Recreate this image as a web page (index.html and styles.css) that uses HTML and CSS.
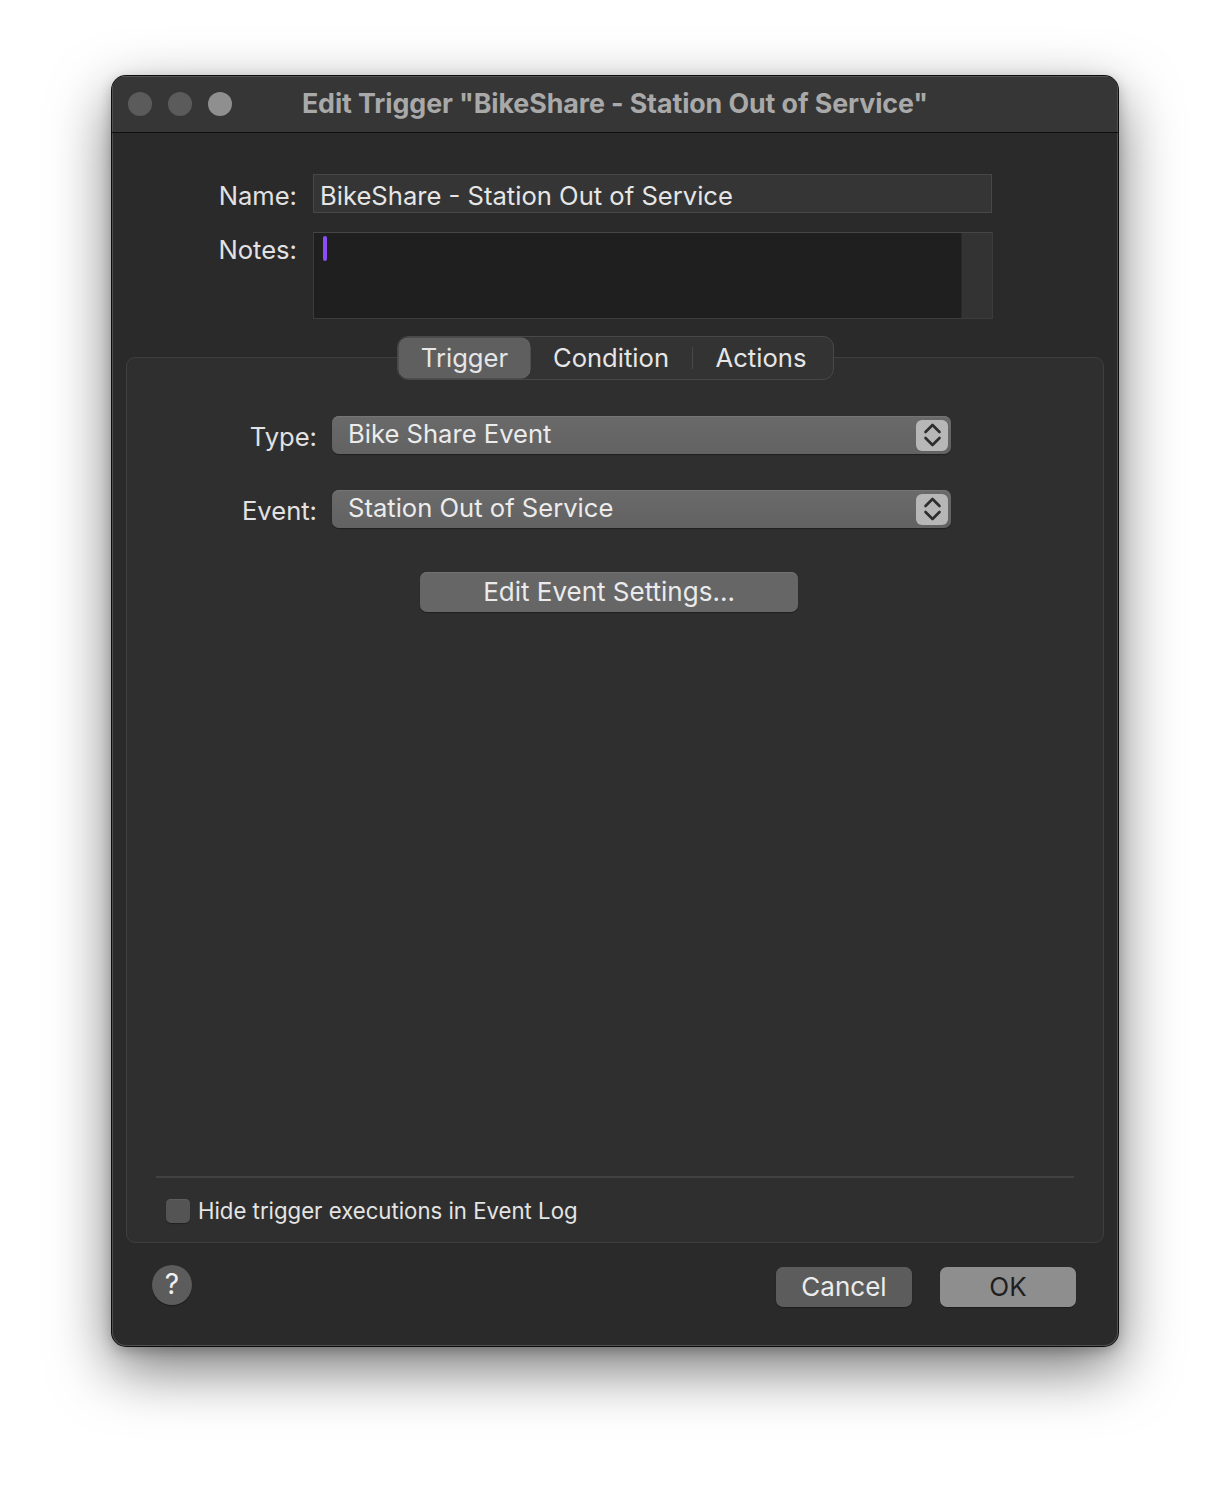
FILE: index.html
```html
<!DOCTYPE html>
<html>
<head>
<meta charset="utf-8">
<link rel="stylesheet" href="styles.css">
</head>
<body>
<div class="stage">
  <div class="window">
    <div class="titlebar">
      <div class="lights">
        <span class="light"></span>
        <span class="light"></span>
        <span class="light light-zoom"></span>
      </div>
      <div class="title">Edit Trigger "BikeShare - Station Out of Service"</div>
      <div></div>
    </div>
    <div class="content">
      <div class="form">
        <div class="label name-label">Name:</div>
        <div class="field">BikeShare - Station Out of Service</div>
        <div class="label notes-label">Notes:</div>
        <div class="notes">
          <div class="notes-text"><span class="caret"></span></div>
          <div class="notes-scroll"></div>
        </div>
      </div>

      <div class="tabview">
        <div class="segmented">
          <div class="seg seg-on">Trigger</div>
          <div class="seg">Condition</div>
          <div class="seg-div"></div>
          <div class="seg">Actions</div>
        </div>
        <div class="tabbox">
          <div class="popups">
            <div class="plabel">Type:</div>
            <div class="popup"><span class="ptext">Bike Share Event</span>
              <span class="arrows"><svg width="32" height="31" viewBox="0 0 32 31"><path d="M9.5 12 L16.5 5 L23.5 12" fill="none" stroke="#2e2e2e" stroke-width="2.6" stroke-linecap="round" stroke-linejoin="round"/><path d="M9.5 18 L16.5 25 L23.5 18" fill="none" stroke="#2e2e2e" stroke-width="2.6" stroke-linecap="round" stroke-linejoin="round"/></svg></span>
            </div>
            <div class="plabel">Event:</div>
            <div class="popup"><span class="ptext">Station Out of Service</span>
              <span class="arrows"><svg width="32" height="31" viewBox="0 0 32 31"><path d="M9.5 12 L16.5 5 L23.5 12" fill="none" stroke="#2e2e2e" stroke-width="2.6" stroke-linecap="round" stroke-linejoin="round"/><path d="M9.5 18 L16.5 25 L23.5 18" fill="none" stroke="#2e2e2e" stroke-width="2.6" stroke-linecap="round" stroke-linejoin="round"/></svg></span>
            </div>
          </div>
          <div class="btn-row">
            <div class="btn settings">Edit Event Settings...</div>
          </div>
          <div class="spacer"></div>
          <div class="sep"></div>
          <div class="check-row">
            <span class="checkbox"></span>
            <span class="check-label">Hide trigger executions in Event Log</span>
          </div>
        </div>
      </div>

      <div class="footer">
        <div class="help">?</div>
        <div class="actions">
          <div class="btn cancel">Cancel</div>
          <div class="btn ok">OK</div>
        </div>
      </div>
    </div>
  </div>
</div>
</body>
</html>
```

FILE: styles.css
```css
* { box-sizing: border-box; }
html, body { margin: 0; padding: 0; background: #ffffff; }
body {
  font-family: Inter, "Noto Sans", "DejaVu Sans", sans-serif;
  color: #e4e4e4;
  width: 1230px;
  height: 1494px;
  overflow: hidden;
}
.stage {
  padding: 76px 0 0 112px;
}
.window {
  width: 1006px;
  height: 1270px;
  background: #2a2a2a;
  border-radius: 14px;
  overflow: hidden;
  box-shadow: 0 0 0 1px #0c0c0c, inset 0 0 0 1px #505050, 0 22px 60px rgba(0,0,0,0.55), 0 4px 14px rgba(0,0,0,0.25);
  display: flex;
  flex-direction: column;
}
.titlebar {
  height: 57px;
  flex: none;
  background: #363636;
  border-bottom: 1px solid #0f0f0f;
  display: grid;
  grid-template-columns: 1fr auto 1fr;
  align-items: center;
  box-shadow: inset 0 1px 0 #555, inset 1px 0 0 #505050, inset -1px 0 0 #505050;
}
.lights {
  display: flex;
  gap: 16px;
  padding-left: 16px;
}
.light {
  width: 24px;
  height: 24px;
  border-radius: 50%;
  background: #5b5b5b;
}
.light-zoom { background: #8f8f8f; }
.title {
  font-weight: 700;
  font-size: 26.8px;
  color: #a9a9a9;
  letter-spacing: -0.1px;
  padding-bottom: 3px;
}
.content {
  flex: 1;
  display: flex;
  flex-direction: column;
}
.form {
  display: grid;
  grid-template-columns: 185px 680px;
  column-gap: 16px;
  row-gap: 19px;
  padding-top: 41px;
}
.label {
  text-align: right;
  font-size: 25.6px;
  color: #e2e2e2;
}
.name-label { height: 39px; line-height: 43px; }
.notes-label { line-height: 36px; }
.field {
  height: 39px;
  width: 679px;
  background: #353535;
  border: 1px solid #474747;
  font-size: 25.6px;
  line-height: 41px;
  padding-left: 6px;
  color: #e6e6e6;
}
.notes {
  height: 87px;
  border: 1px solid #3c3c3c;
  border-top-color: #464646;
  display: flex;
  background: #1f1f1f;
}
.notes-text {
  flex: 1;
  padding: 3px 0 0 9px;
  border-right: 1px solid #2a2a2a;
}
.caret {
  display: block;
  width: 4px;
  height: 25px;
  border-radius: 2px;
  background: #8b4df7;
}
.notes-scroll {
  width: 30px;
  background: #333333;
}
.tabview {
  margin: 17px 14px 0;
}
.segmented {
  position: relative;
  z-index: 1;
  width: 437px;
  height: 44px;
  margin: 0 0 0 271px;
  display: flex;
  align-items: center;
  background: #333333;
  border: 1px solid #484848;
  border-radius: 11px;
  padding: 1px;
}
.seg {
  height: 40px;
  display: flex;
  align-items: center;
  justify-content: center;
  font-size: 25.6px;
  color: #e6e6e6;
  padding-bottom: 2px;
}
.seg:nth-child(1) { width: 131px; }
.seg:nth-child(2) { width: 162px; }
.seg:nth-child(4) { width: 136px; }
.seg-on {
  background: #5f5f5f;
  border-radius: 9px;
  box-shadow: 0 0 0 0.5px #6a6a6a;
}
.seg-div {
  width: 1px;
  height: 22px;
  background: #484848;
}
.tabbox {
  margin-top: -23px;
  height: 886px;
  background: #2f2f2f;
  border: 1px solid #3f3f3f;
  border-radius: 9px;
  display: flex;
  flex-direction: column;
}
.popups {
  display: grid;
  grid-template-columns: 190px 619px;
  column-gap: 15px;
  row-gap: 36px;
  padding-top: 58px;
  align-items: center;
}
.plabel {
  text-align: right;
  font-size: 25.6px;
  color: #e2e2e2;
  padding-top: 2px;
}
.popup {
  height: 38px;
  border-radius: 7px;
  background: linear-gradient(#6a6a6a, #626262);
  box-shadow: 0 1px 1px rgba(0,0,0,0.35), inset 0 1px 0 #747474;
  display: flex;
  align-items: center;
  justify-content: space-between;
  padding: 0 3px 0 16px;
}
.ptext {
  font-size: 25.6px;
  color: #ececec;
  padding-bottom: 3px;
}
.arrows {
  width: 32px;
  height: 31px;
  border-radius: 6px;
  background: #b7b7b7;
  display: flex;
}
.btn-row {
  padding: 44px 0 0 293px;
}
.btn {
  height: 40px;
  border-radius: 7px;
  display: flex;
  align-items: center;
  justify-content: center;
  font-size: 26px;
  color: #ebebeb;
  padding-bottom: 2px;
}
.settings {
  width: 378px;
  background: #666666;
  box-shadow: 0 1px 1px rgba(0,0,0,0.35), inset 0 1px 0 #727272;
}
.spacer { flex: 1; }
.sep {
  height: 2px;
  margin: 0 29px;
  background: #424242;
}
.check-row {
  display: flex;
  align-items: center;
  gap: 8px;
  padding: 19px 0 18px 39px;
}
.checkbox {
  width: 24px;
  height: 24px;
  border-radius: 5px;
  background: #545454;
  box-shadow: inset 0 1px 0 #5e5e5e, 0 1px 1px rgba(0,0,0,0.3);
}
.check-label {
  font-size: 22.2px;
  color: #e4e4e4;
}
.footer {
  display: flex;
  justify-content: space-between;
  align-items: flex-start;
  padding: 22px 42px 0 40px;
}
.help {
  width: 40px;
  height: 40px;
  border-radius: 50%;
  background: #5c5c5c;
  display: flex;
  align-items: center;
  justify-content: center;
  font-size: 28px;
  color: #f0f0f0;
  box-shadow: 0 1px 1px rgba(0,0,0,0.35);
  padding-bottom: 2px;
}
.actions {
  display: flex;
  gap: 28px;
  padding-top: 2px;
}
.cancel {
  width: 136px;
  background: #5c5c5c;
  box-shadow: 0 1px 1px rgba(0,0,0,0.35);
}
.ok {
  width: 136px;
  background: #8e8e8e;
  color: #1f1f1f;
  box-shadow: 0 1px 1px rgba(0,0,0,0.35);
}
```
